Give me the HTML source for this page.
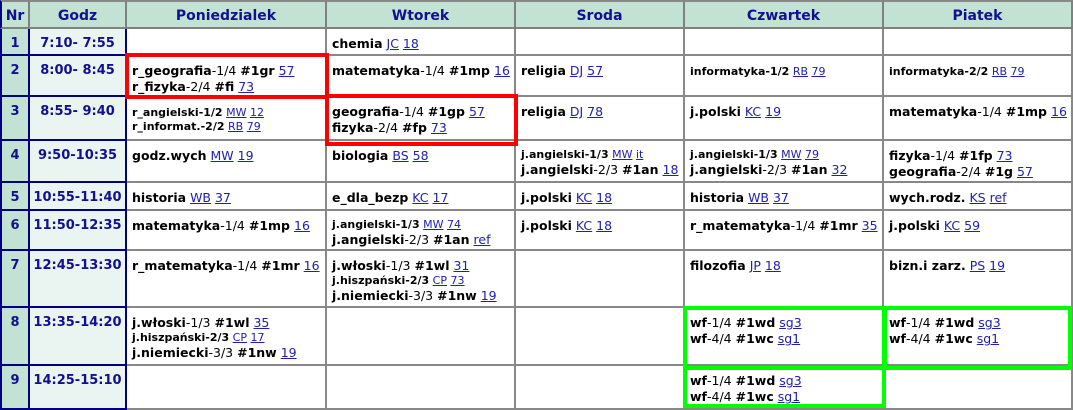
<!DOCTYPE html><html><head><meta charset="utf-8"><style>
body{margin:0;width:1073px;height:408px;overflow:hidden;background:#fff;font-family:"DejaVu Sans","Liberation Sans",sans-serif;position:relative}
.c{position:absolute;box-sizing:border-box;border-right:2px solid #888;border-bottom:2px solid #888;padding:7px 0 0 5px;font-size:12.5px;line-height:16px;color:#000;white-space:nowrap;overflow:hidden}
.h{background:#c2e2d4;color:#101090;font-weight:bold;font-size:14px;text-align:center;padding:6px 0 0 0;border-color:#808080}
.n{background:#c2e2d4;color:#101090;font-weight:bold;text-align:center;font-size:13px;border-color:#000080;border-left:2px solid #000080;padding:7px 0 0 0}
.g{background:#eaf4f0;color:#101090;font-weight:bold;text-align:center;font-size:13px;border-color:#000080;padding:7px 0 0 0}
b{font-weight:bold}
a{color:#2020b0;text-decoration:underline}
.s{font-size:11px;line-height:14px}
.box{position:absolute;box-sizing:border-box;border:4px solid}
</style></head><body>
<div class="c h" style="left:0;top:0;width:30px;height:29px;border-left:2px solid #000080;border-top:2px solid #888">Nr</div>
<div class="c h" style="left:30px;top:0;width:97px;height:29px;border-top:2px solid #888">Godz</div>
<div class="c h" style="left:127px;top:0;width:200px;height:29px;border-top:2px solid #888">Poniedzialek</div>
<div class="c h" style="left:327px;top:0;width:189px;height:29px;border-top:2px solid #888">Wtorek</div>
<div class="c h" style="left:516px;top:0;width:169px;height:29px;border-top:2px solid #888">Sroda</div>
<div class="c h" style="left:685px;top:0;width:199px;height:29px;border-top:2px solid #888">Czwartek</div>
<div class="c h" style="left:884px;top:0;width:189px;height:29px;border-top:2px solid #888">Piatek</div>

<div class="c n" style="left:0;top:29px;width:30px;height:27px">1</div>
<div class="c g" style="left:30px;top:29px;width:97px;height:27px">7:10- 7:55</div>
<div class="c" style="left:127px;top:29px;width:200px;height:27px"></div>
<div class="c" style="left:327px;top:29px;width:189px;height:27px"><b>chemia</b> <a>JC</a> <a>18</a></div>
<div class="c" style="left:516px;top:29px;width:169px;height:27px"></div>
<div class="c" style="left:685px;top:29px;width:199px;height:27px"></div>
<div class="c" style="left:884px;top:29px;width:189px;height:27px"></div>

<div class="c n" style="left:0;top:56px;width:30px;height:41px">2</div>
<div class="c g" style="left:30px;top:56px;width:97px;height:41px">8:00- 8:45</div>
<div class="c" style="left:127px;top:56px;width:200px;height:41px"><b>r_geografia</b>-1/4 <b>#1gr</b> <a>57</a><br><b>r_fizyka</b>-2/4 <b>#fi</b> <a>73</a></div>
<div class="c" style="left:327px;top:56px;width:189px;height:41px"><b>matematyka</b>-1/4 <b>#1mp</b> <a>16</a></div>
<div class="c" style="left:516px;top:56px;width:169px;height:41px"><b>religia</b> <a>DJ</a> <a>57</a></div>
<div class="c" style="left:685px;top:56px;width:199px;height:41px"><span class="s"><b>informatyka-1/2</b> <a>RB</a> <a>79</a></span></div>
<div class="c" style="left:884px;top:56px;width:189px;height:41px"><span class="s"><b>informatyka-2/2</b> <a>RB</a> <a>79</a></span></div>

<div class="c n" style="left:0;top:97px;width:30px;height:44px">3</div>
<div class="c g" style="left:30px;top:97px;width:97px;height:44px">8:55- 9:40</div>
<div class="c" style="left:127px;top:97px;width:200px;height:44px;padding-top:9px"><div class="s"><b>r_angielski-1/2</b> <a>MW</a> <a>12</a></div><div class="s"><b>r_informat.-2/2</b> <a>RB</a> <a>79</a></div></div>
<div class="c" style="left:327px;top:97px;width:189px;height:44px"><b>geografia</b>-1/4 <b>#1gp</b> <a>57</a><br><b>fizyka</b>-2/4 <b>#fp</b> <a>73</a></div>
<div class="c" style="left:516px;top:97px;width:169px;height:44px"><b>religia</b> <a>DJ</a> <a>78</a></div>
<div class="c" style="left:685px;top:97px;width:199px;height:44px"><b>j.polski</b> <a>KC</a> <a>19</a></div>
<div class="c" style="left:884px;top:97px;width:189px;height:44px"><b>matematyka</b>-1/4 <b>#1mp</b> <a>16</a></div>

<div class="c n" style="left:0;top:141px;width:30px;height:42px">4</div>
<div class="c g" style="left:30px;top:141px;width:97px;height:42px">9:50-10:35</div>
<div class="c" style="left:127px;top:141px;width:200px;height:42px"><b>godz.wych</b> <a>MW</a> <a>19</a></div>
<div class="c" style="left:327px;top:141px;width:189px;height:42px"><b>biologia</b> <a>BS</a> <a>58</a></div>
<div class="c" style="left:516px;top:141px;width:169px;height:42px;padding-top:7px"><div class="s"><b>j.angielski-1/3</b> <a>MW</a> <a>it</a></div><b>j.angielski</b>-2/3 <b>#1an</b> <a>18</a></div>
<div class="c" style="left:685px;top:141px;width:199px;height:42px;padding-top:7px"><div class="s"><b>j.angielski-1/3</b> <a>MW</a> <a>79</a></div><b>j.angielski</b>-2/3 <b>#1an</b> <a>32</a></div>
<div class="c" style="left:884px;top:141px;width:189px;height:42px"><b>fizyka</b>-1/4 <b>#1fp</b> <a>73</a><br><b>geografia</b>-2/4 <b>#1g</b> <a>57</a></div>

<div class="c n" style="left:0;top:183px;width:30px;height:28px">5</div>
<div class="c g" style="left:30px;top:183px;width:97px;height:28px">10:55-11:40</div>
<div class="c" style="left:127px;top:183px;width:200px;height:28px"><b>historia</b> <a>WB</a> <a>37</a></div>
<div class="c" style="left:327px;top:183px;width:189px;height:28px"><b>e_dla_bezp</b> <a>KC</a> <a>17</a></div>
<div class="c" style="left:516px;top:183px;width:169px;height:28px"><b>j.polski</b> <a>KC</a> <a>18</a></div>
<div class="c" style="left:685px;top:183px;width:199px;height:28px"><b>historia</b> <a>WB</a> <a>37</a></div>
<div class="c" style="left:884px;top:183px;width:189px;height:28px"><b>wych.rodz.</b> <a>KS</a> <a>ref</a></div>

<div class="c n" style="left:0;top:211px;width:30px;height:40px">6</div>
<div class="c g" style="left:30px;top:211px;width:97px;height:40px">11:50-12:35</div>
<div class="c" style="left:127px;top:211px;width:200px;height:40px"><b>matematyka</b>-1/4 <b>#1mp</b> <a>16</a></div>
<div class="c" style="left:327px;top:211px;width:189px;height:40px;padding-top:7px"><div class="s"><b>j.angielski-1/3</b> <a>MW</a> <a>74</a></div><b>j.angielski</b>-2/3 <b>#1an</b> <a>ref</a></div>
<div class="c" style="left:516px;top:211px;width:169px;height:40px"><b>j.polski</b> <a>KC</a> <a>18</a></div>
<div class="c" style="left:685px;top:211px;width:199px;height:40px"><b>r_matematyka</b>-1/4 <b>#1mr</b> <a>35</a></div>
<div class="c" style="left:884px;top:211px;width:189px;height:40px"><b>j.polski</b> <a>KC</a> <a>59</a></div>

<div class="c n" style="left:0;top:251px;width:30px;height:57px">7</div>
<div class="c g" style="left:30px;top:251px;width:97px;height:57px">12:45-13:30</div>
<div class="c" style="left:127px;top:251px;width:200px;height:57px"><b>r_matematyka</b>-1/4 <b>#1mr</b> <a>16</a></div>
<div class="c" style="left:327px;top:251px;width:189px;height:57px"><b>j.włoski</b>-1/3 <b>#1wl</b> <a>31</a><div class="s"><b>j.hiszpański-2/3</b> <a>CP</a> <a>73</a></div><b>j.niemiecki</b>-3/3 <b>#1nw</b> <a>19</a></div>
<div class="c" style="left:516px;top:251px;width:169px;height:57px"></div>
<div class="c" style="left:685px;top:251px;width:199px;height:57px"><b>filozofia</b> <a>JP</a> <a>18</a></div>
<div class="c" style="left:884px;top:251px;width:189px;height:57px"><b>bizn.i zarz.</b> <a>PS</a> <a>19</a></div>

<div class="c n" style="left:0;top:308px;width:30px;height:58px">8</div>
<div class="c g" style="left:30px;top:308px;width:97px;height:58px">13:35-14:20</div>
<div class="c" style="left:127px;top:308px;width:200px;height:58px"><b>j.włoski</b>-1/3 <b>#1wl</b> <a>35</a><div class="s"><b>j.hiszpański-2/3</b> <a>CP</a> <a>17</a></div><b>j.niemiecki</b>-3/3 <b>#1nw</b> <a>19</a></div>
<div class="c" style="left:327px;top:308px;width:189px;height:58px"></div>
<div class="c" style="left:516px;top:308px;width:169px;height:58px"></div>
<div class="c" style="left:685px;top:308px;width:199px;height:58px"><b>wf</b>-1/4 <b>#1wd</b> <a>sg3</a><br><b>wf</b>-4/4 <b>#1wc</b> <a>sg1</a></div>
<div class="c" style="left:884px;top:308px;width:189px;height:58px"><b>wf</b>-1/4 <b>#1wd</b> <a>sg3</a><br><b>wf</b>-4/4 <b>#1wc</b> <a>sg1</a></div>

<div class="c n" style="left:0;top:366px;width:30px;height:44px">9</div>
<div class="c g" style="left:30px;top:366px;width:97px;height:44px">14:25-15:10</div>
<div class="c" style="left:127px;top:366px;width:200px;height:44px"></div>
<div class="c" style="left:327px;top:366px;width:189px;height:44px"></div>
<div class="c" style="left:516px;top:366px;width:169px;height:44px"></div>
<div class="c" style="left:685px;top:366px;width:199px;height:44px"><b>wf</b>-1/4 <b>#1wd</b> <a>sg3</a><br><b>wf</b>-4/4 <b>#1wc</b> <a>sg1</a></div>
<div class="c" style="left:884px;top:366px;width:189px;height:44px"></div>

<div class="box" style="left:125px;top:53px;width:204px;height:46px;border-color:#f00"></div>
<div class="box" style="left:325px;top:94px;width:193px;height:52px;border-color:#f00"></div>
<div class="box" style="left:683px;top:306px;width:203px;height:64px;border-color:#0f0"></div>
<div class="box" style="left:883px;top:306px;width:189px;height:64px;border-color:#0f0"></div>
<div class="box" style="left:683px;top:366px;width:203px;height:42px;border-color:#0f0"></div>
</body></html>
